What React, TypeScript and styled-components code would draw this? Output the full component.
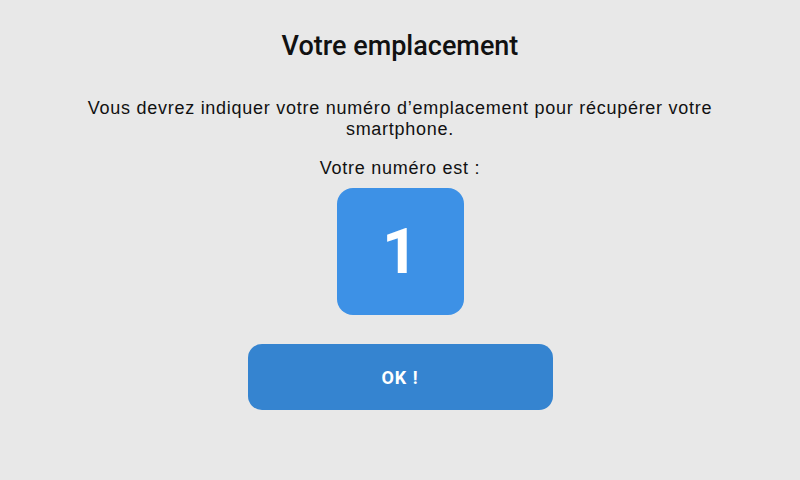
import React from 'react';
import styled, { createGlobalStyle } from 'styled-components';

const GlobalStyle = createGlobalStyle`
  html, body {
    margin: 0;
    padding: 0;
    background: #e8e8e8;
  }
  body {
    font-family: "Liberation Sans", Arial, sans-serif;
    color: #111;
  }
`;

const Screen = styled.div`
  width: 800px;
  height: 480px;
  box-sizing: border-box;
  padding-top: 30px;
  display: flex;
  flex-direction: column;
  align-items: center;
  background: #e8e8e8;
`;

const Title = styled.h1`
  margin: 0;
  font-family: Roboto, "Liberation Sans", sans-serif;
  font-weight: 500;
  font-size: 27px;
  line-height: 32px;
  color: #111;
`;

const Message = styled.p`
  margin: 36px 0 0;
  width: 660px;
  text-align: center;
  font-size: 18px;
  letter-spacing: 0.74px;
  line-height: 21px;
`;

const Label = styled.p`
  margin: 18px 0 0;
  font-size: 18px;
  letter-spacing: 0.74px;
  line-height: 21px;
`;

const NumberBox = styled.div`
  margin-top: 9px;
  width: 127px;
  height: 127px;
  border-radius: 16px;
  background: #3d91e6;
  color: #fff;
  display: flex;
  align-items: center;
  justify-content: center;
  font-family: Roboto, sans-serif;
  font-weight: 700;
  font-size: 63px;
`;

const OkButton = styled.button`
  margin-top: 29px;
  width: 305px;
  height: 66px;
  border: none;
  border-radius: 14px;
  background: #3584d0;
  color: #fff;
  font-family: Roboto, sans-serif;
  font-weight: 700;
  font-size: 18px;
  letter-spacing: 1px;
  cursor: pointer;
`;

const App: React.FC = () => {
  return (
    <>
      <GlobalStyle />
      <Screen>
        <Title>Votre emplacement</Title>
        <Message>
          Vous devrez indiquer votre numéro d’emplacement pour récupérer votre smartphone.
        </Message>
        <Label>Votre numéro est :</Label>
        <NumberBox>1</NumberBox>
        <OkButton>OK !</OkButton>
      </Screen>
    </>
  );
};

export default App;
